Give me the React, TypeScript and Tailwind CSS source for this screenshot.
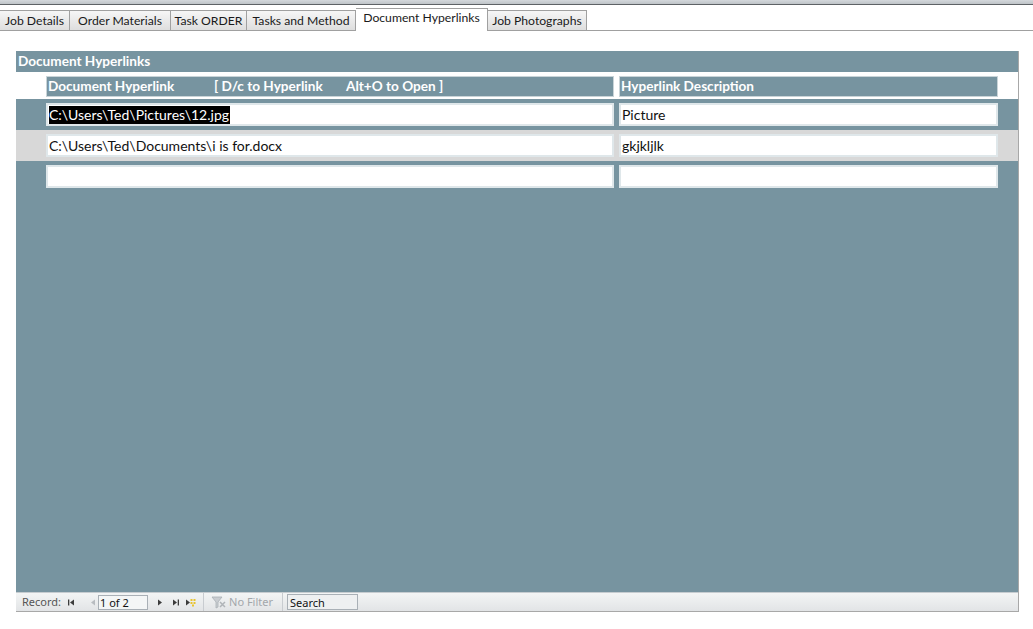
const tabs = [
  { label: "Job Details", w: "w-[70px]" },
  { label: "Order Materials", w: "w-[101px]" },
  { label: "Task ORDER", w: "w-[76px]" },
  { label: "Tasks and Method", w: "w-[109px]" },
  { label: "Document Hyperlinks", w: "w-[132px]", active: true },
  { label: "Job Photographs", w: "w-[99px]" },
];

const rows = [
  { link: "C:\\Users\\Ted\\Pictures\\12.jpg", desc: "Picture", selected: true, band: "bg-[#7794a0]" },
  { link: "C:\\Users\\Ted\\Documents\\i is for.docx", desc: "gkjkljlk", band: "bg-[#d8d8d8]" },
  { link: "", desc: "", band: "bg-[#7794a0]" },
];

function NavArrow({ dir, bar, dim }: { dir: "l" | "r"; bar?: boolean; dim?: boolean }) {
  const c = dim ? "#b8bcc0" : "#3c3c3c";
  return (
    <svg width="9" height="9" viewBox="0 0 9 9">
      {dir === "l" ? (
        <>
          {bar && <rect x="1" y="1.5" width="1.3" height="6" fill={c} />}
          <polygon points="7,1.5 3,4.5 7,7.5" fill={c} />
        </>
      ) : (
        <>
          <polygon points="2,1.5 6,4.5 2,7.5" fill={c} />
          {bar && <rect x="6.7" y="1.5" width="1.3" height="6" fill={c} />}
        </>
      )}
    </svg>
  );
}

export default function App() {
  return (
    <div className="w-[1033px] h-[629px] bg-white overflow-hidden font-['Lato','Open_Sans',sans-serif]">
      <div className="h-[5px] bg-gradient-to-b from-[#d4d8dc] to-[#bfc4c8] border-b border-[#5e6266]" />

      <div className="mt-[5px] flex items-end h-[21px] border-b border-[#a0a0a0]">
        {tabs.map((t, i) =>
          t.active ? (
            <div
              key={t.label}
              className={`${t.w} h-[23px] -mb-px bg-white border-t border-r border-[#a0a0a0] flex items-center justify-center text-[12.2px] text-[#1a1a1a] pb-[3px] relative z-10`}
            >
              {t.label}
            </div>
          ) : (
            <div
              key={t.label}
              className={`${t.w} h-[20px] bg-gradient-to-b from-[#f6f6f6] to-[#dedede] border-t border-r border-[#a0a0a0] ${i === 0 ? "border-l-0" : ""} flex items-center justify-center text-[12.2px] text-[#1a1a1a] pt-[2px]`}
            >
              {t.label}
            </div>
          )
        )}
      </div>

      <div className="mt-[20px] ml-[16px] w-[1003px] h-[561px] flex flex-col border-r border-[#a8a8a8]">
        <div className="h-[21px] bg-[#7794a0] flex items-center pl-[2px] text-white font-bold text-[13.6px]">
          Document Hyperlinks
        </div>

        <div className="h-[27px] bg-white flex items-start pt-[4px] pl-[30px] gap-[5px]">
          <div className="w-[568px] h-[21px] bg-[#7794a0] border border-[#c9d4d8] flex items-center text-white font-bold text-[13.6px] pl-[1px]">
            <span className="w-[166px]">Document Hyperlink</span>
            <span className="w-[132px]">[ D/c to Hyperlink</span>
            <span>Alt+O to Open ]</span>
          </div>
          <div className="w-[379px] h-[21px] bg-[#7794a0] border border-[#c9d4d8] flex items-center text-white font-bold text-[13.6px] pl-[1px]">
            Hyperlink Description
          </div>
        </div>

        {rows.map((r, i) => (
          <div key={i} className={`h-[31px] ${r.band} flex items-start pt-[4px] pl-[30px] gap-[5px]`}>
            <div className="w-[568px] h-[23px] bg-white border-2 border-[#dfe7ea] flex items-center pl-[1px] text-[14px] text-[#111]">
              {r.selected ? <span className="bg-black text-white leading-[18px] pr-[1px]">{r.link}</span> : r.link}
            </div>
            <div className="w-[379px] h-[23px] bg-white border-2 border-[#dfe7ea] flex items-center pl-[1px] text-[14px] text-[#111]">
              {r.desc}
            </div>
          </div>
        ))}

        <div className="flex-1 bg-[#7794a0]" />

        <div className="h-[20px] border-t border-[#c6ccd0] border-b border-b-[#a8a8a8] bg-gradient-to-b from-[#f3f5f5] to-[#e2e4e6] flex items-center text-[11px] text-[#555] font-['Noto_Sans',sans-serif]">
          <span className="ml-[6px] mr-[6px]">Record:</span>
          <NavArrow dir="l" bar />
          <span className="w-[12px]" />
          <NavArrow dir="l" dim />
          <div className="ml-[1px] w-[50px] h-[15px] border border-[#a9b0b6] bg-[#f4f6f6] flex items-center pl-[1px] text-[11px] text-[#111] leading-none">
            1 of 2
          </div>
          <span className="w-[8px]" />
          <NavArrow dir="r" />
          <span className="w-[6px]" />
          <NavArrow dir="r" bar />
          <span className="w-[5px]" />
          <svg width="11" height="9" viewBox="0 0 11 9">
            <polygon points="1,1.5 5,4.5 1,7.5" fill="#3c3c3c" />
            <rect x="5.5" y="1" width="2" height="2" fill="#e8c430" />
            <rect x="8.5" y="1" width="2" height="2" fill="#e8c430" />
            <rect x="5.5" y="4" width="2" height="2" fill="#e8c430" />
            <rect x="8.5" y="4" width="2" height="2" fill="#e8c430" />
            <rect x="7" y="6.5" width="2" height="2" fill="#e8c430" />
          </svg>
          <span className="ml-[7px] w-px h-[18px] bg-[#c8ccd0]" />
          <svg className="ml-[7px]" width="15" height="13" viewBox="0 0 15 13">
            <path d="M1 1 L11 1 L7 6 L7 11 L5 12 L5 6 Z" fill="#c9cdd1" stroke="#aab0b5" strokeWidth="0.8" />
            <path d="M9 6 L14 11 M14 6 L9 11" stroke="#b0b4b8" strokeWidth="1.5" />
          </svg>
          <span className="ml-[3px] text-[#a3a7ab]">No Filter</span>
          <span className="ml-[9px] w-px h-[18px] bg-[#c8ccd0]" />
          <div className="ml-[4px] w-[71px] h-[16px] border border-[#a9b0b6] bg-[#eef0f1] flex items-center pl-[2px] text-[11px] text-[#111] leading-none">
            Search
          </div>
        </div>
      </div>
    </div>
  );
}
